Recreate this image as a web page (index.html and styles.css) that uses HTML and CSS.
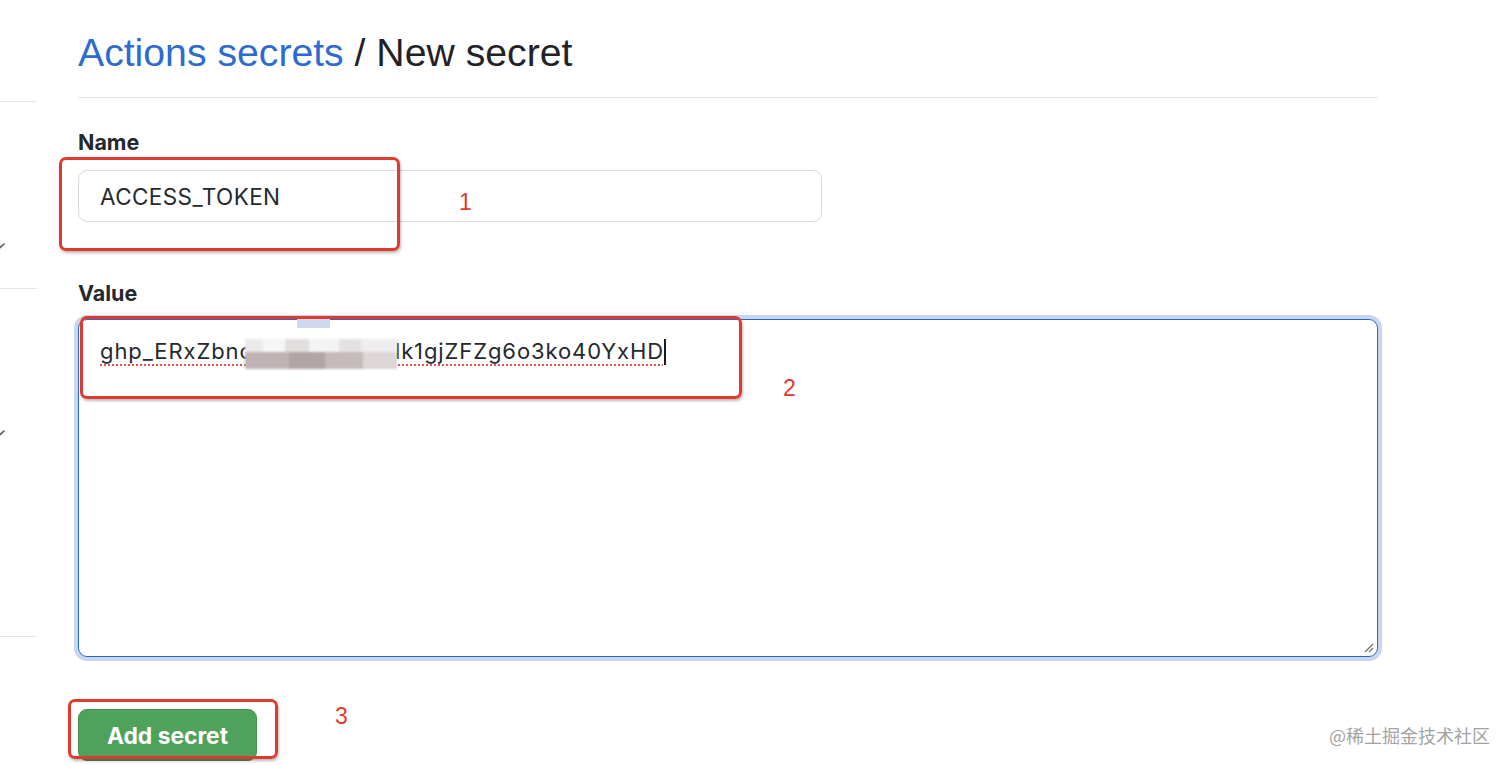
FILE: index.html
```html
<!DOCTYPE html>
<html lang="en">
<head>
<meta charset="utf-8">
<title>Actions secrets / New secret</title>
<link rel="stylesheet" href="styles.css">
</head>
<body>
<div class="page">
  <aside class="sidebar">
    <div class="side-group side-group-a">
      <svg class="side-mark" width="8" height="8" viewBox="0 0 8 8"><path d="M0 6.5 L5 2" stroke="#555" stroke-width="1.6" fill="none" stroke-linecap="round"/></svg>
    </div>
    <div class="side-group side-group-b">
      <svg class="side-mark" width="8" height="8" viewBox="0 0 8 8"><path d="M0 6.5 L5 2" stroke="#555" stroke-width="1.6" fill="none" stroke-linecap="round"/></svg>
    </div>
    <div class="side-group side-group-c"></div>
  </aside>

  <main class="content">
    <h2 class="subhead"><a class="crumb-link" href="#">Actions secrets</a> / New secret</h2>

    <form class="secret-form">
      <div class="form-group">
        <label class="form-label" for="secret_name">Name</label>
        <input class="form-control name-input" id="secret_name" type="text" value="ACCESS_TOKEN">
      </div>

      <div class="form-group form-group-value">
        <label class="form-label">Value</label>
        <div class="form-control textarea-focus" role="textbox">
          <span class="typed">ghp_ERxZbnc</span><span class="pixelated"><span class="px-row px-row-top"><span class="px px-a"></span><span class="px px-b"></span><span class="px px-c"></span><span class="px px-d"></span><span class="px px-e"></span><span class="px px-f"></span></span><span class="px-row px-row-mid"><span class="px px-g"></span><span class="px px-h"></span><span class="px px-i"></span><span class="px px-j"></span></span></span><span class="typed">lk1gjZFZg6o3ko40YxHD</span><span class="caret"></span>
          <span class="blue-chip"></span>
          <svg class="resize-grip" width="12" height="12" viewBox="0 0 12 12"><path d="M11 3 L3 11 M11 7 L7 11" stroke="#6a6a6a" stroke-width="1.1" fill="none"/></svg>
        </div>
      </div>

      <button class="btn-primary" type="button">Add secret</button>
    </form>
  </main>

  <div class="mark-box mark-box-1"></div>
  <div class="mark-num mark-num-1">1</div>
  <div class="mark-box mark-box-2"></div>
  <div class="mark-num mark-num-2">2</div>
  <div class="mark-box mark-box-3"></div>
  <div class="mark-num mark-num-3">3</div>

  <div class="watermark">@稀土掘金技术社区</div>
</div>
</body>
</html>
```

FILE: styles.css
```css
* { box-sizing: border-box; }

html, body {
  margin: 0;
  padding: 0;
  height: 765px;
  overflow: hidden;
  background: #ffffff;
}

body {
  font-family: "Liberation Sans", Arial, sans-serif;
  color: #24292e;
}

.page {
  position: relative;
  display: flex;
  height: 765px;
}

/* ---------- cut-off sidebar ---------- */
.sidebar {
  flex: none;
  width: 37px;
  padding-top: 101px;
  display: flex;
  flex-direction: column;
}

.side-group {
  border-top: 1px solid #e4e6e9;
  padding-top: 140px;
}

.side-group-a { height: 187px; }
.side-group-b { height: 348px; }
.side-group-c { height: 60px; padding-top: 0; }

.side-mark {
  display: block;
  margin-left: -1px;
}

/* ---------- main content ---------- */
.content {
  flex: none;
  width: 1300px;
  margin-left: 41px;
}

.subhead {
  margin: 0;
  padding-top: 29px;
  padding-bottom: 20px;
  font-size: 39.2px;
  line-height: 48px;
  font-weight: 400;
  color: #1f2328;
  border-bottom: 1px solid #e1e4e8;
}

.crumb-link {
  color: #2d6bcf;
  text-decoration: none;
}

.secret-form {
  display: flex;
  flex-direction: column;
  align-items: flex-start;
  padding-top: 30px;
}

.form-group {
  display: flex;
  flex-direction: column;
}

.form-group-value {
  margin-top: 57px;
}

.form-label {
  font-family: Inter, "Liberation Sans", sans-serif;
  font-weight: 700;
  font-size: 21.5px;
  line-height: 28px;
  color: #24292e;
  margin-bottom: 14px;
}

.form-group-value .form-label {
  margin-bottom: 12px;
}

.form-control {
  font-family: Inter, "Liberation Sans", sans-serif;
  color: #24292e;
  background: #ffffff;
  border: 1px solid #d6d9dd;
  border-radius: 9px;
  outline: none;
}

.name-input {
  width: 744px;
  height: 52px;
  padding: 0 21px;
  font-size: 22.5px;
  letter-spacing: 0.4px;
}

.textarea-focus {
  position: relative;
  width: 1300px;
  height: 338px;
  padding: 16px 21px;
  font-size: 22px;
  line-height: 30px;
  letter-spacing: 0.9px;
  border-color: #2c66c6;
  box-shadow: 0 0 0 4px #c6d7f1;
  white-space: nowrap;
}

.typed {
  text-decoration: underline dotted #e0524a;
  text-decoration-thickness: 2px;
  text-underline-offset: 5px;
}

.pixelated {
  display: inline-flex;
  flex-direction: column;
  vertical-align: 7px;
  width: 152px;
  height: 32px;
  margin-left: -8px;
  margin-right: -2px;
  filter: blur(1.2px);
}

.px-row {
  display: flex;
}

.px-row-top { height: 13px; }
.px-row-mid { height: 17px; }

.px { display: block; height: 100%; }
.px-a { width: 18px; background: #ece9ea; }
.px-b { width: 22px; background: #f7f6f6; }
.px-c { width: 24px; background: #e2dede; }
.px-d { width: 30px; background: #f4f3f3; }
.px-e { width: 22px; background: #e4e1e1; }
.px-f { width: 36px; background: #efeded; }
.px-g { width: 44px; background: #bfb3b5; }
.px-h { width: 36px; background: #b2a5a7; }
.px-i { width: 38px; background: #c5babc; }
.px-j { width: 34px; background: #dcd6d6; }

.blue-chip {
  position: absolute;
  left: 218px;
  top: -4px;
  width: 33px;
  height: 12px;
  background: #cbd8ee;
}

.caret {
  display: inline-block;
  width: 2px;
  height: 26px;
  margin-left: 0;
  vertical-align: -6px;
  background: #1a1a1a;
}

.resize-grip {
  position: absolute;
  right: 3px;
  bottom: 3px;
}

.btn-primary {
  margin-top: 52px;
  height: 52px;
  padding: 0 28px;
  font-family: Inter, "Liberation Sans", sans-serif;
  font-size: 22.8px;
  font-weight: 700;
  color: #ffffff;
  background: #4fa15b;
  border: 1px solid #45924f;
  border-radius: 9px;
}

/* ---------- red annotations ---------- */
.mark-box {
  position: absolute;
  border: 3px solid #e0392d;
  border-radius: 7px;
  box-shadow: 1px 2px 3px rgba(0, 0, 0, 0.28);
}

.mark-box-1 { left: 59px; top: 157px; width: 341px; height: 94px; }
.mark-box-2 { left: 80px; top: 316px; width: 662px; height: 83px; }
.mark-box-3 { left: 68px; top: 699px; width: 210px; height: 60px; }

.mark-num {
  position: absolute;
  font-family: "Liberation Sans", Arial, sans-serif;
  font-size: 23px;
  line-height: 24px;
  color: #e0392d;
}

.mark-num-1 { left: 459px; top: 190px; }
.mark-num-2 { left: 783px; top: 376px; }
.mark-num-3 { left: 335px; top: 704px; }

.watermark {
  position: absolute;
  right: 22px;
  top: 724px;
  font-family: "Noto Sans CJK SC", "Liberation Sans", sans-serif;
  font-size: 18px;
  line-height: 22px;
  color: #a3a3a3;
  text-shadow: 0 0 2px #ffffff;
}
```
